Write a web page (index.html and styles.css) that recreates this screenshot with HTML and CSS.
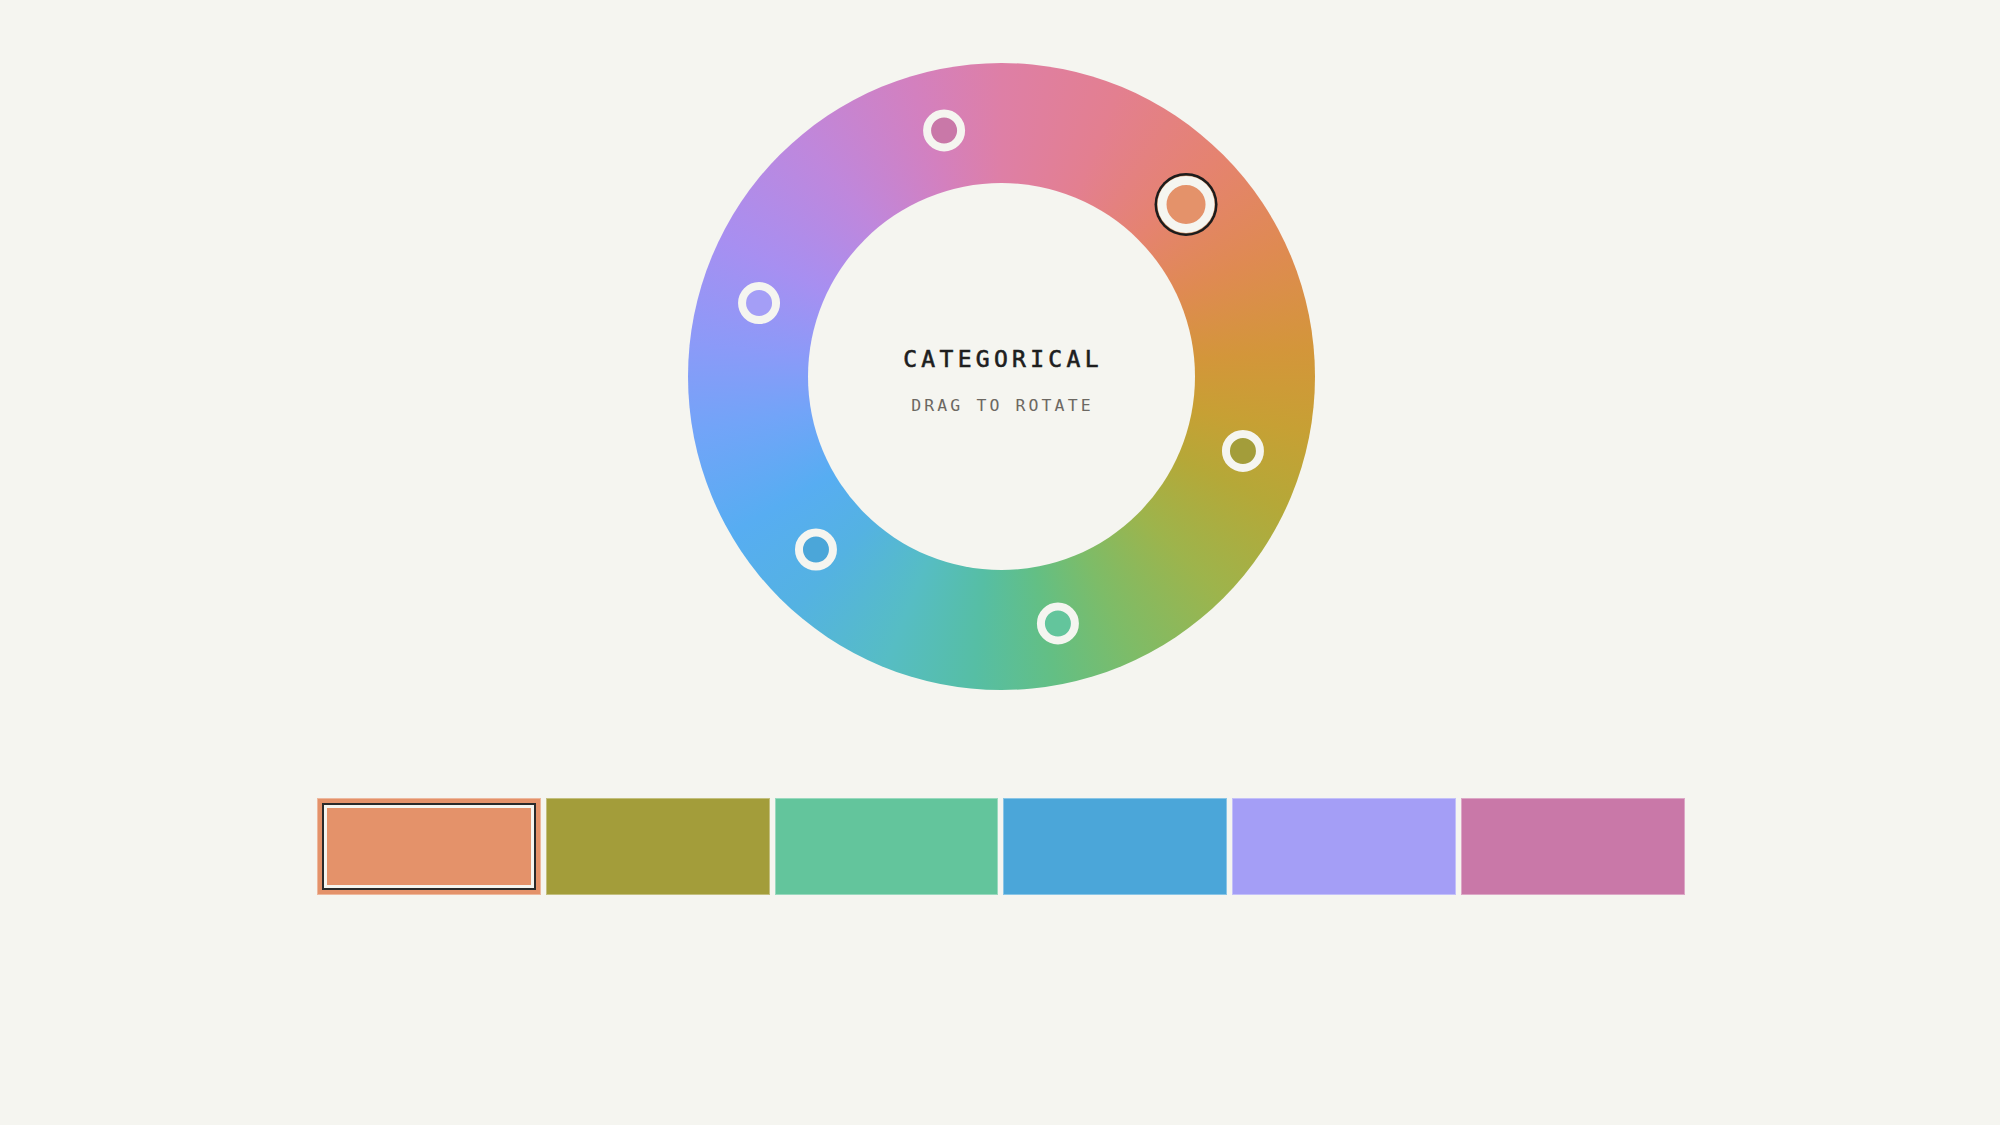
FILE: index.html
```html
<!DOCTYPE html>
<html lang="en">
<head>
<meta charset="utf-8">
<title>Categorical palette</title>
<link rel="stylesheet" href="styles.css">
</head>
<body>
<main class="picker">
  <div class="wheel">
    <div class="wheel-hole">
      <div class="wheel-title">CATEGORICAL</div>
      <div class="wheel-hint">DRAG TO ROTATE</div>
    </div>
    <span class="handle handle--active c-orange" style="--a:47deg"></span>
    <span class="handle c-olive" style="--a:107deg"></span>
    <span class="handle c-green" style="--a:167deg"></span>
    <span class="handle c-blue" style="--a:227deg"></span>
    <span class="handle c-purple" style="--a:287deg"></span>
    <span class="handle c-pink" style="--a:347deg"></span>
  </div>

  <div class="swatches">
    <div class="swatch swatch--active c-orange"></div>
    <div class="swatch c-olive"></div>
    <div class="swatch c-green"></div>
    <div class="swatch c-blue"></div>
    <div class="swatch c-purple"></div>
    <div class="swatch c-pink"></div>
  </div>
</main>
</body>
</html>
```

FILE: styles.css
```css
:root {
  --bg: #f5f5f0;
  --ink: #1e1e1e;
  --muted: #6c6862;
  --ring-r: 253px;
}

* { box-sizing: border-box; }

html, body {
  margin: 0;
  background: var(--bg);
}

body {
  font-family: "DejaVu Sans Mono", "Liberation Mono", monospace;
  color: var(--ink);
}

.picker {
  display: flex;
  flex-direction: column;
  align-items: center;
  gap: 108px;
  padding: 63px 0 0 2px;
}

/* colour wheel: conic ring with a plain disc in the middle */
.wheel {
  position: relative;
  width: 627px;
  height: 627px;
  border-radius: 50%;
  padding: 120px;
  background: conic-gradient(from 0deg,
    #de7fa6 0deg,
    #e37f90 22deg,
    #e5836f 45deg,
    #df8a52 65deg,
    #d3963a 85deg,
    #c7a034 100deg,
    #b5a838 115deg,
    #9db44c 135deg,
    #7dbc68 155deg,
    #63bf84 170deg,
    #56bea4 185deg,
    #56bdc4 202deg,
    #54b2e2 222deg,
    #57adf2 240deg,
    #72a4f8 260deg,
    #8b9af8 276deg,
    #a78ff1 296deg,
    #bf87dc 320deg,
    #d380bf 343deg,
    #de7fa6 360deg);
}

.wheel-hole {
  width: 100%;
  height: 100%;
  border-radius: 50%;
  background: var(--bg);
  display: flex;
  flex-direction: column;
  align-items: center;
  justify-content: center;
  gap: 26px;
  padding-top: 8px;
}

.wheel-title {
  font-size: 23px;
  line-height: 24px;
  font-weight: 400;
  -webkit-text-stroke: 0.6px var(--ink);
  letter-spacing: 4.3px;
  padding-left: 4px;
  color: var(--ink);
}

.wheel-hint {
  font-size: 16.5px;
  line-height: 18px;
  letter-spacing: 3.1px;
  padding-left: 3px;
  color: var(--muted);
}

/* handles sit on the ring at their hue angle */
.handle {
  position: absolute;
  left: 50%;
  top: 50%;
  width: 42px;
  height: 42px;
  border-radius: 50%;
  border: 8px solid var(--bg);
  transform: translate(-50%, -50%) rotate(var(--a)) translateY(calc(-1 * var(--ring-r))) rotate(calc(-1 * var(--a)));
}

.handle--active {
  width: 57px;
  height: 57px;
  border-width: 9px;
  box-shadow: 0 0 0 0.5px #c98a60, 0 0 0 3px #1c1c1c;
}

/* palette strip */
.swatches {
  display: flex;
  gap: 5px;
  width: 1368px;
}

.swatch {
  position: relative;
  flex: 1;
  height: 97px;
  border: 1px solid rgba(255, 255, 255, 0.35);
}

.swatch--active::after {
  content: "";
  position: absolute;
  inset: 6px;
  border: 3px solid var(--bg);
  box-shadow: 0 0 0 2px #2a2a2a;
}

.c-orange { background-color: #e4926a; }
.c-olive  { background-color: #a39d3a; }
.c-green  { background-color: #63c59c; }
.c-blue   { background-color: #4ba6d9; }
.c-purple { background-color: #a49ef6; }
.c-pink   { background-color: #c978a8; }
```
